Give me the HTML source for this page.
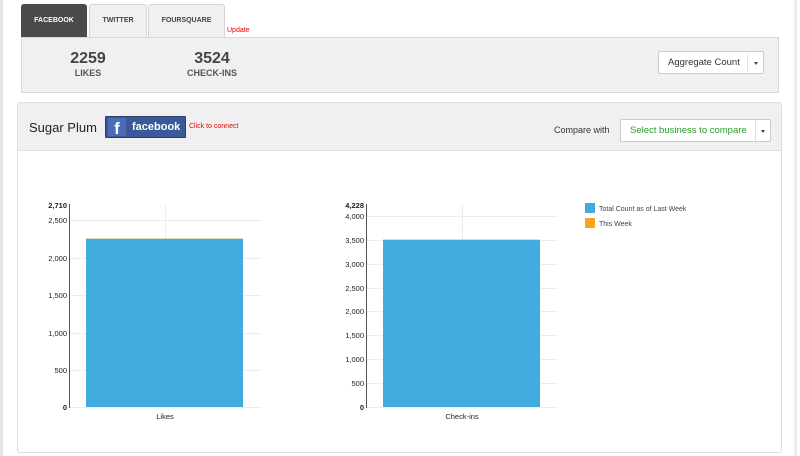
<!DOCTYPE html>
<html><head><meta charset="utf-8"><style>
*{box-sizing:border-box;margin:0;padding:0}
body{width:800px;height:456px;background:#fff;font-family:"Liberation Sans",Arial,sans-serif;position:relative;overflow:hidden;color:#333}
.a{position:absolute}
.tab{position:absolute;top:4px;height:33px;border:1px solid #d6d6d6;border-bottom:none;border-radius:3px 3px 0 0;background:#f0f0f0;font-size:7px;font-weight:bold;text-align:center;line-height:32px;color:#444}
.btn{position:absolute;background:#fff;border:1px solid #ccc;border-radius:2px;font-size:10px;line-height:20px;white-space:nowrap}
.caret{position:absolute;width:0;height:0;border-left:2.5px solid transparent;border-right:2.5px solid transparent;border-top:3px solid #444}
</style></head><body>
<div class="a" style="left:0;top:0;width:3px;height:456px;background:#e6e6e6"></div>
<div class="a" style="left:794px;top:0;width:3px;height:456px;background:#ececec"></div>

<div class="tab" style="left:21px;width:66px;background:#4a4a4a;border-color:#4a4a4a;color:#fff">FACEBOOK</div>
<div class="tab" style="left:89px;width:58px">TWITTER</div>
<div class="tab" style="left:148px;width:77px">FOURSQUARE</div>
<div class="a" style="left:227px;top:27px;font-size:7px;color:#e00">Update</div>

<div class="a" style="left:21px;top:37px;width:758px;height:56px;background:#f0f0f0;border:1px solid #d8d8d8"></div>
<div class="a" style="left:48px;top:50px;width:80px;text-align:center;font-weight:bold;font-size:16px;color:#444">2259</div>
<div class="a" style="left:48px;top:68px;width:80px;text-align:center;font-weight:bold;font-size:9px;color:#555">LIKES</div>
<div class="a" style="left:172px;top:50px;width:80px;text-align:center;font-weight:bold;font-size:16px;color:#444">3524</div>
<div class="a" style="left:172px;top:68px;width:80px;text-align:center;font-weight:bold;font-size:9px;color:#555">CHECK-INS</div>
<div class="btn" style="left:658px;top:51px;width:106px;height:23px"><span style="position:absolute;left:9px;top:1px;font-size:9.5px">Aggregate Count</span><div class="a" style="left:88px;top:2px;width:1px;height:17px;background:#e2e2e2"></div><div class="caret" style="left:95px;top:10px"></div></div>

<div class="a" style="left:17px;top:102px;width:765px;height:351px;border:1px solid #ddd;border-radius:3px;background:#fff"></div>
<div class="a" style="left:18px;top:103px;width:763px;height:48px;background:#f0f0f0;border-bottom:1px solid #e0e0e0"></div>
<div class="a" style="left:29px;top:120px;font-size:13px;color:#222;white-space:nowrap">Sugar Plum</div>
<div class="a" style="left:105px;top:116px;width:81px;height:22px;background:#3b5998;border:1px solid #2a3f6f;border-radius:1px">
 <div class="a" style="left:2px;top:1px;width:18px;height:18px;background:#4a6db5;border-radius:2px;color:#fff;font-weight:bold;font-size:17px;line-height:22px;text-align:center">f</div>
 <div class="a" style="left:26px;top:4px;color:#fff;font-weight:bold;font-size:11px;line-height:12px">facebook</div>
</div>
<div class="a" style="left:189px;top:123px;font-size:7px;color:#e00;white-space:nowrap">Click to connect</div>
<div class="a" style="left:554px;top:125px;font-size:9px;color:#333;white-space:nowrap">Compare with</div>
<div class="btn" style="left:620px;top:119px;width:151px;height:23px"><span style="position:absolute;left:9px;top:1px;color:#2a9a2a;font-size:9.5px">Select business to compare</span><div class="a" style="left:134px;top:0;width:1px;height:21px;background:#ddd"></div><div class="caret" style="left:140px;top:10px"></div></div>

<svg class="a" style="left:0;top:0" width="800" height="456" font-family="Liberation Sans,Arial,sans-serif" font-size="7.5" fill="#222">
 <g stroke="#ececec" stroke-width="1">
  <line x1="70" y1="220.5" x2="261" y2="220.5"/><line x1="70" y1="258.5" x2="261" y2="258.5"/><line x1="70" y1="295.5" x2="261" y2="295.5"/><line x1="70" y1="333.5" x2="261" y2="333.5"/><line x1="70" y1="370.5" x2="261" y2="370.5"/><line x1="70" y1="407.5" x2="261" y2="407.5"/>
  <line x1="165.5" y1="205" x2="165.5" y2="407"/>
  <line x1="367" y1="216.5" x2="557" y2="216.5"/><line x1="367" y1="240.5" x2="557" y2="240.5"/><line x1="367" y1="264.5" x2="557" y2="264.5"/><line x1="367" y1="288.5" x2="557" y2="288.5"/><line x1="367" y1="311.5" x2="557" y2="311.5"/><line x1="367" y1="335.5" x2="557" y2="335.5"/><line x1="367" y1="359.5" x2="557" y2="359.5"/><line x1="367" y1="383.5" x2="557" y2="383.5"/><line x1="367" y1="407.5" x2="557" y2="407.5"/>
  <line x1="462.5" y1="205" x2="462.5" y2="407"/>
 </g>
 <rect x="86" y="238.5" width="157" height="0.7" fill="#c8b98a"/>
 <rect x="86" y="239" width="157" height="168" fill="#42abde"/>
 <rect x="383" y="239.5" width="157" height="0.7" fill="#c8b98a"/>
 <rect x="383" y="240" width="157" height="167" fill="#42abde"/>
 <line x1="69.5" y1="204" x2="69.5" y2="408" stroke="#555"/>
 <line x1="366.5" y1="204" x2="366.5" y2="408" stroke="#555"/>
 <g text-anchor="end">
  <text x="67" y="208" font-weight="bold">2,710</text><text x="67" y="223">2,500</text><text x="67" y="261">2,000</text><text x="67" y="298">1,500</text><text x="67" y="336">1,000</text><text x="67" y="373">500</text><text x="67" y="410" font-weight="bold">0</text>
  <text x="364" y="208" font-weight="bold">4,228</text><text x="364" y="219">4,000</text><text x="364" y="243">3,500</text><text x="364" y="267">3,000</text><text x="364" y="291">2,500</text><text x="364" y="314">2,000</text><text x="364" y="338">1,500</text><text x="364" y="362">1,000</text><text x="364" y="386">500</text><text x="364" y="410" font-weight="bold">0</text>
 </g>
 <text x="165" y="419" text-anchor="middle">Likes</text>
 <text x="462" y="419" text-anchor="middle">Check-ins</text>
 <rect x="585" y="203" width="10" height="10" fill="#42abde"/>
 <rect x="585" y="218" width="10" height="10" fill="#f5a623"/>
 <text x="599" y="211" font-size="7" fill="#444">Total Count as of Last Week</text>
 <text x="599" y="226" font-size="7" fill="#444">This Week</text>
</svg>
</body></html>
